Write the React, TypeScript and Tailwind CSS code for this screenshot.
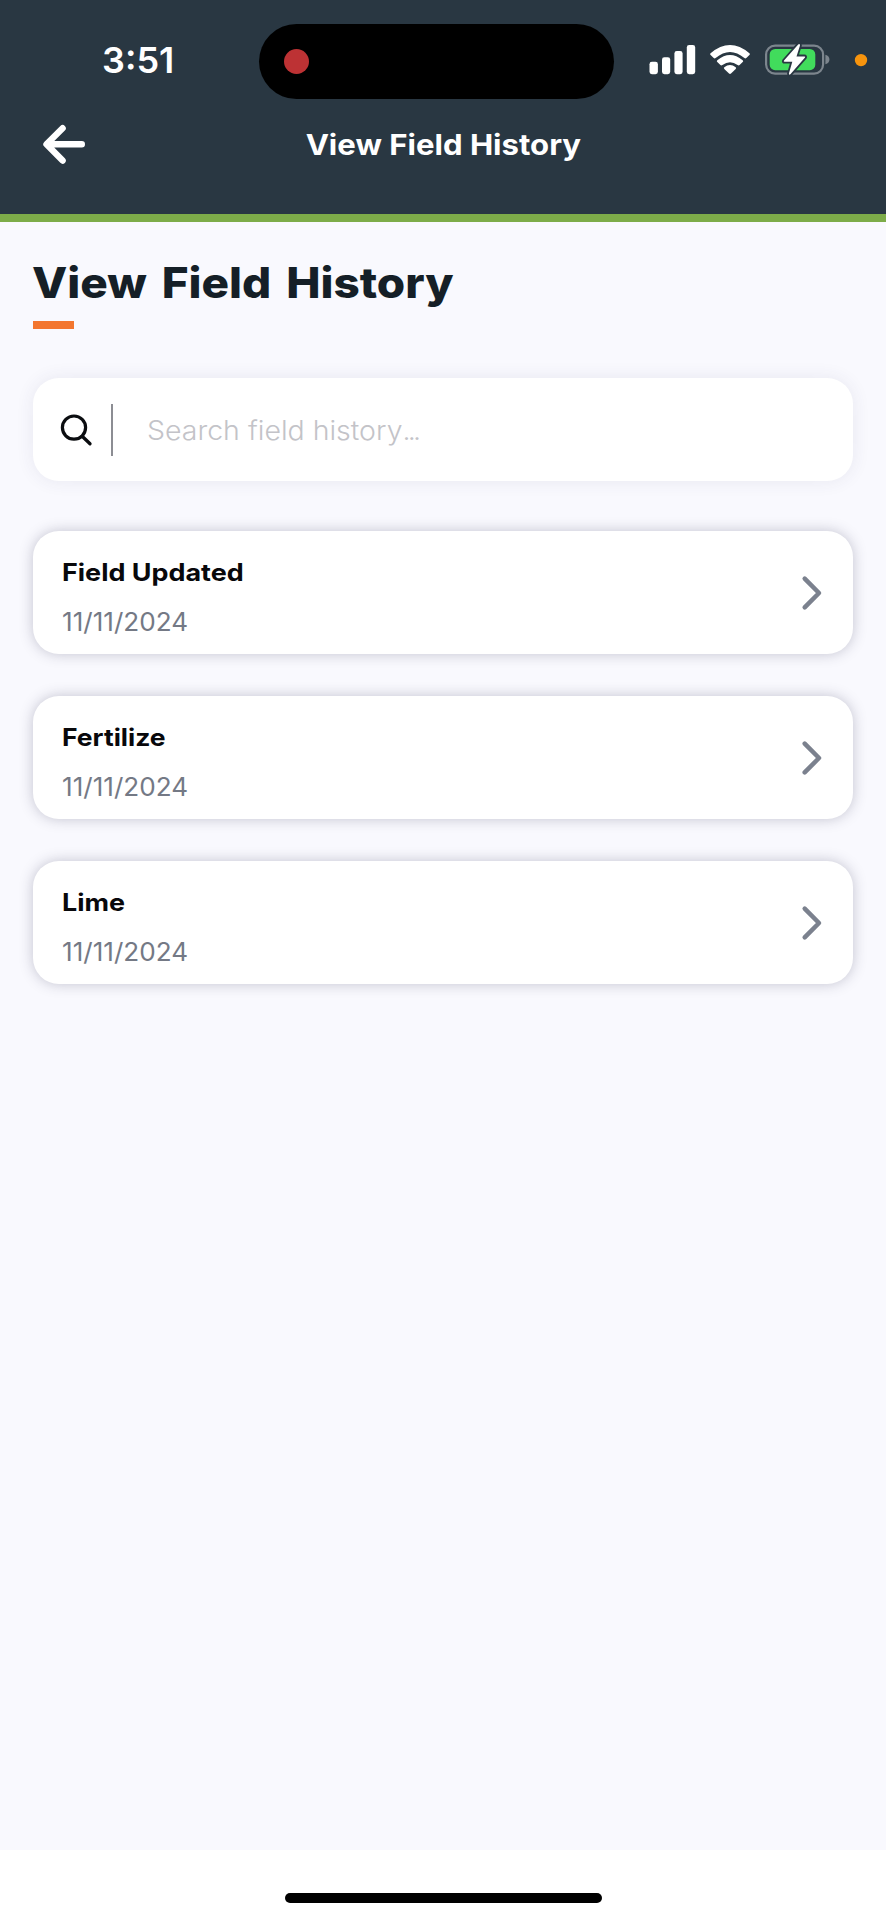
const records = [
  { title: 'Field Updated', date: '11/11/2024', titleClass: 'scale-x-[1.122]' },
  { title: 'Fertilize', date: '11/11/2024', titleClass: 'scale-x-[1.105]' },
  { title: 'Lime', date: '11/11/2024', titleClass: 'scale-x-[1.12]' },
];

function StatusIcons() {
  return (
    <svg width="238" height="40" viewBox="648 40 238 40" fill="none" className="shrink-0">
      <g fill="#fff">
        <rect x="649.5" y="61.8" width="8.4" height="12.4" rx="2.4" />
        <rect x="662" y="57.2" width="8.2" height="17" rx="2.4" />
        <rect x="674.4" y="51" width="8.2" height="23.2" rx="2.4" />
        <rect x="686.8" y="45" width="8.4" height="29.2" rx="2.4" />
        <path d="M710.6 53.2Q730 36.8 749.4 53.2Q750.4 54 749.4 55L746.3 58.1Q745.4 58.9 744.4 58.1Q730 46 715.6 58.1Q714.6 58.9 713.7 58.1L710.6 55Q709.6 54 710.6 53.2Z" />
        <path d="M717.3 60.2Q730 49.6 742.7 60.2Q743.7 61.1 742.7 62.1L739.6 65.1Q738.7 65.9 737.6 65.1Q730 59.3 722.4 65.1Q721.3 65.9 720.4 65.1L717.3 62.1Q716.3 61.1 717.3 60.2Z" />
        <path d="M724.3 67.2Q730 62.6 735.7 67.2Q736.6 68 735.7 68.9L731 73.6Q730 74.5 729 73.6L724.3 68.9Q723.4 68 724.3 67.2Z" />
      </g>
      <rect x="766.1" y="45.6" width="57" height="28" rx="9" stroke="#7c858d" strokeWidth="2.2" />
      <path d="M825.4 54.7C830.8 56 830.8 63 825.4 64.3Z" fill="#7c858d" />
      <rect x="769.7" y="49" width="45.6" height="21.2" rx="5.5" fill="#41dc5c" />
      <path
        d="M798.2 44.4L784 60.6Q783.2 61.8 784.7 61.8H792.3L788.9 73.5Q788.8 75.4 790.4 74.2L805 57.6Q805.7 56.4 804.3 56.4H796.5L800 45.4Q799.9 43.4 798.2 44.4Z"
        fill="#fff"
        stroke="#293742"
        strokeWidth="3.6"
        paintOrder="stroke"
        strokeLinejoin="round"
      />
      <circle cx="861" cy="60.1" r="6.2" fill="#f7940d" />
    </svg>
  );
}

function BackArrow() {
  return (
    <svg width="48" height="48" viewBox="40 120 48 48" fill="none" className="shrink-0">
      <path d="M62.6 128.2L46.5 144.3L62.6 160.6M47 144.3H81.8" stroke="#fff" strokeWidth="6.4" strokeLinecap="round" strokeLinejoin="round" />
    </svg>
  );
}

function SearchIcon() {
  return (
    <svg width="34" height="34" viewBox="59 413 34 34" fill="none" className="shrink-0">
      <circle cx="74" cy="427.6" r="11.6" stroke="#0b0d10" strokeWidth="3.2" />
      <path d="M82.2 436.2L90 443.8" stroke="#0b0d10" strokeWidth="3.3" strokeLinecap="round" />
    </svg>
  );
}

function Chevron() {
  return (
    <svg width="24" height="38" viewBox="0 0 24 38" fill="none" className="shrink-0">
      <path d="M4.7 4.6L19 19L4.7 33.4" stroke="#7b818e" strokeWidth="4.5" strokeLinecap="round" strokeLinejoin="round" />
    </svg>
  );
}

export default function App() {
  return (
    <div className="flex h-[1920px] w-[886px] flex-col overflow-hidden bg-[#f9f9fe] font-['Inter',sans-serif]">
      <header className="h-[222px] shrink-0 border-b-8 border-[#7dac49] bg-[#293742]">
        <div className="flex h-[120px] items-center pl-[102px]">
          <time className="w-[157px] text-[36px] leading-[40px] font-semibold text-white">3:51</time>
          <div className="mt-[3px] flex h-[75px] w-[355px] items-center rounded-full bg-black pl-[25px]">
            <span className="size-[25px] rounded-full bg-[#bd3234]" />
          </div>
          <div className="ml-[34px]">
            <StatusIcons />
          </div>
        </div>
        <div className="flex h-12 items-center pl-[40px]">
          <BackArrow />
          <div className="w-[710px] pt-[2px] text-center">
            <span className="inline-block scale-x-[1.073] text-[29px] leading-[40px] font-bold whitespace-nowrap text-white">
              View Field History
            </span>
          </div>
        </div>
      </header>

      <main className="flex flex-1 flex-col px-[33px] pt-[33px]">
        <h1 className="h-[56px] text-[42px] leading-[56px] font-extrabold whitespace-nowrap text-[#151f27]">
          <span className="-ml-px inline-block origin-left scale-x-[1.092] [word-spacing:4.4px]">View Field History</span>
        </h1>
        <div className="mt-[10px] h-2 w-[41px] bg-[#f3762f]" />

        <div className="mt-[49px] flex h-[103px] shrink-0 items-center rounded-[26px] bg-white pl-[26px] shadow-[0_0_18px_rgba(60,60,100,0.09)]">
          <SearchIcon />
          <div className="ml-[18px] h-[52px] w-[2px] bg-[#8c8d93]" />
          <span className="mt-[2px] ml-[34px] origin-left scale-x-[1.055] text-[27px] leading-[40px] font-light whitespace-nowrap text-[#c3c3c8]">
            Search field history<span className="tracking-[-2.6px]">...</span>
          </span>
        </div>

        <ul className="mt-[50px] flex flex-col gap-[42px]">
          {records.map((r) => (
            <li
              key={r.title}
              className="flex h-[123px] items-center justify-between rounded-[26px] bg-white pr-[29px] pl-[29px] shadow-[0_0_14px_rgba(50,50,80,0.27)]"
            >
              <div className="flex flex-col items-start gap-[17px] pt-[9px]">
                <span className={`origin-left text-[24px] leading-[32px] font-bold whitespace-nowrap text-[#08080b] ${r.titleClass}`}>{r.title}</span>
                <span className="origin-left scale-x-[1.045] text-[25px] leading-[32px] whitespace-nowrap text-[#747985]">{r.date}</span>
              </div>
              <Chevron />
            </li>
          ))}
        </ul>
      </main>

      <footer className="flex h-[70px] shrink-0 justify-center bg-white pt-[43px]">
        <div className="h-[10px] w-[317px] rounded-full bg-black" />
      </footer>
    </div>
  );
}
